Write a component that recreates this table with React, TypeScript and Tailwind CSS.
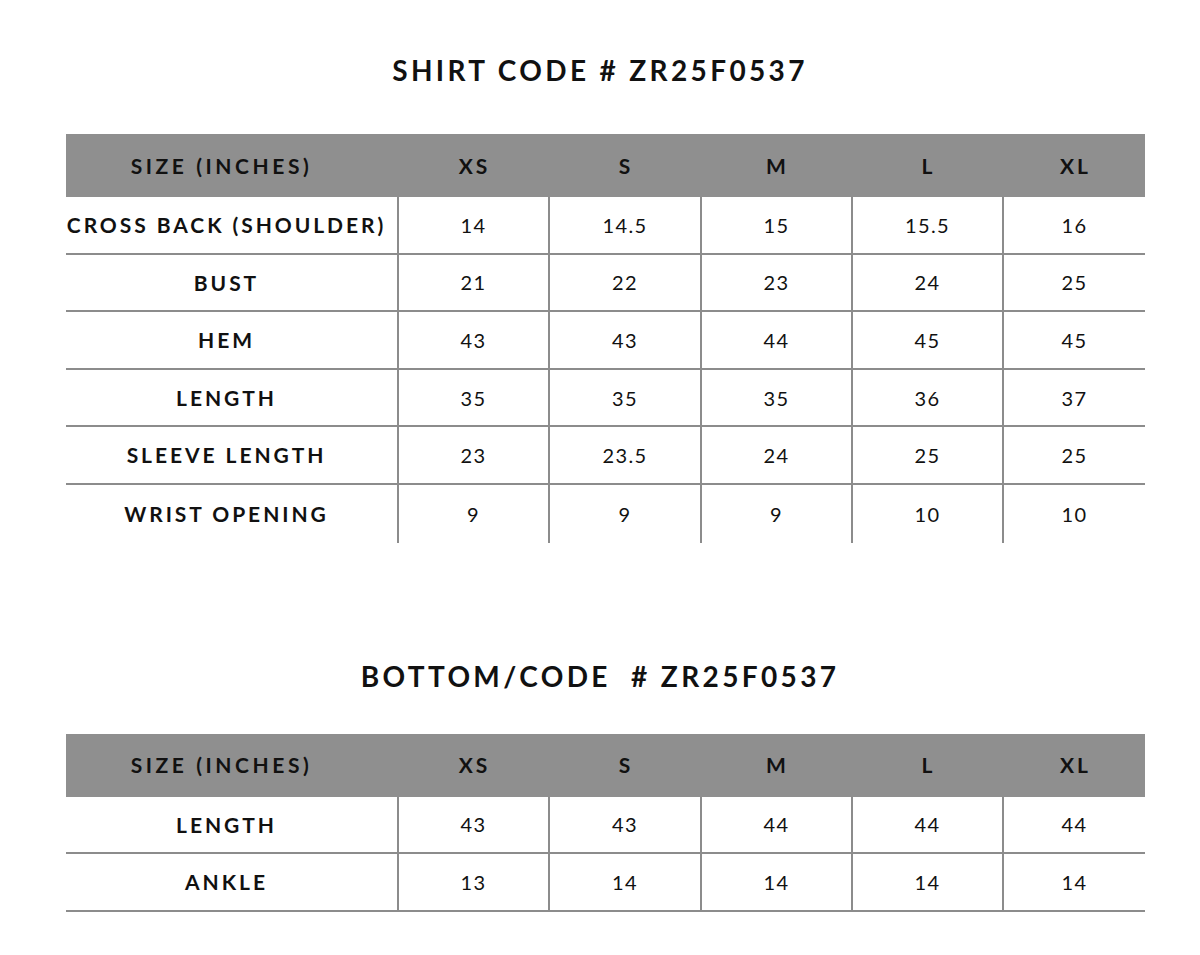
import React from "react";

const cols = "grid grid-cols-[331px_151px_152px_151px_151px_143px]";
const sizes = ["XS", "S", "M", "L", "XL"];

const shirtRows: [string, string[]][] = [
  ["CROSS BACK (SHOULDER)", ["14", "14.5", "15", "15.5", "16"]],
  ["BUST", ["21", "22", "23", "24", "25"]],
  ["HEM", ["43", "43", "44", "45", "45"]],
  ["LENGTH", ["35", "35", "35", "36", "37"]],
  ["SLEEVE LENGTH", ["23", "23.5", "24", "25", "25"]],
  ["WRIST OPENING", ["9", "9", "9", "10", "10"]],
];

const bottomRows: [string, string[]][] = [
  ["LENGTH", ["43", "43", "44", "44", "44"]],
  ["ANKLE", ["13", "14", "14", "14", "14"]],
];

function SizeTable({ rows, lastLine }: { rows: [string, string[]][]; lastLine: boolean }) {
  return (
    <div className="w-[1079px]">
      <div className={`${cols} h-[63px] bg-[#8f8f8f]`}>
        <div className="flex items-center justify-center pr-[20px] text-[21px] font-bold tracking-[0.17em] text-[#111]">
          SIZE (INCHES)
        </div>
        {sizes.map((s) => (
          <div key={s} className="flex items-center justify-center pl-[4px] text-[21px] font-bold tracking-[0.14em] text-[#111]">
            {s}
          </div>
        ))}
      </div>
      {rows.map(([label, vals], i) => {
        const line = i < rows.length - 1 || lastLine;
        return (
          <div
            key={label}
            className={`${cols} h-[57.6px] ${line ? "border-b-2 border-[#8c8c8c]" : ""}`}
          >
            <div className="flex items-center justify-center pr-[10px] text-[21px] font-bold tracking-[0.14em] text-[#111]">
              {label}
            </div>
            {vals.map((v, j) => (
              <div
                key={j}
                className="flex items-center justify-center border-l-2 border-[#8c8c8c] text-[20px] tracking-[0.07em] text-[#111]"
              >
                {v}
              </div>
            ))}
          </div>
        );
      })}
    </div>
  );
}

export default function App() {
  return (
    <div className="min-h-[955px] w-full bg-white pt-[40px] font-['Lato','Liberation_Sans',sans-serif]">
      <div className="flex flex-col items-center">
        <h1 className="flex h-[60px] items-center text-[28px] font-bold tracking-[0.12em] text-[#111]">
          SHIRT CODE # ZR25F0537
        </h1>
        <div className="mt-[34px] ml-[11px]">
          <SizeTable rows={shirtRows} lastLine={false} />
        </div>
        <h2 className="mt-[103px] flex h-[60px] items-center whitespace-pre text-[28px] font-bold tracking-[0.12em] text-[#111]">
          BOTTOM/CODE  # ZR25F0537
        </h2>
        <div className="mt-[28px] ml-[11px]">
          <SizeTable rows={bottomRows} lastLine={true} />
        </div>
      </div>
    </div>
  );
}
